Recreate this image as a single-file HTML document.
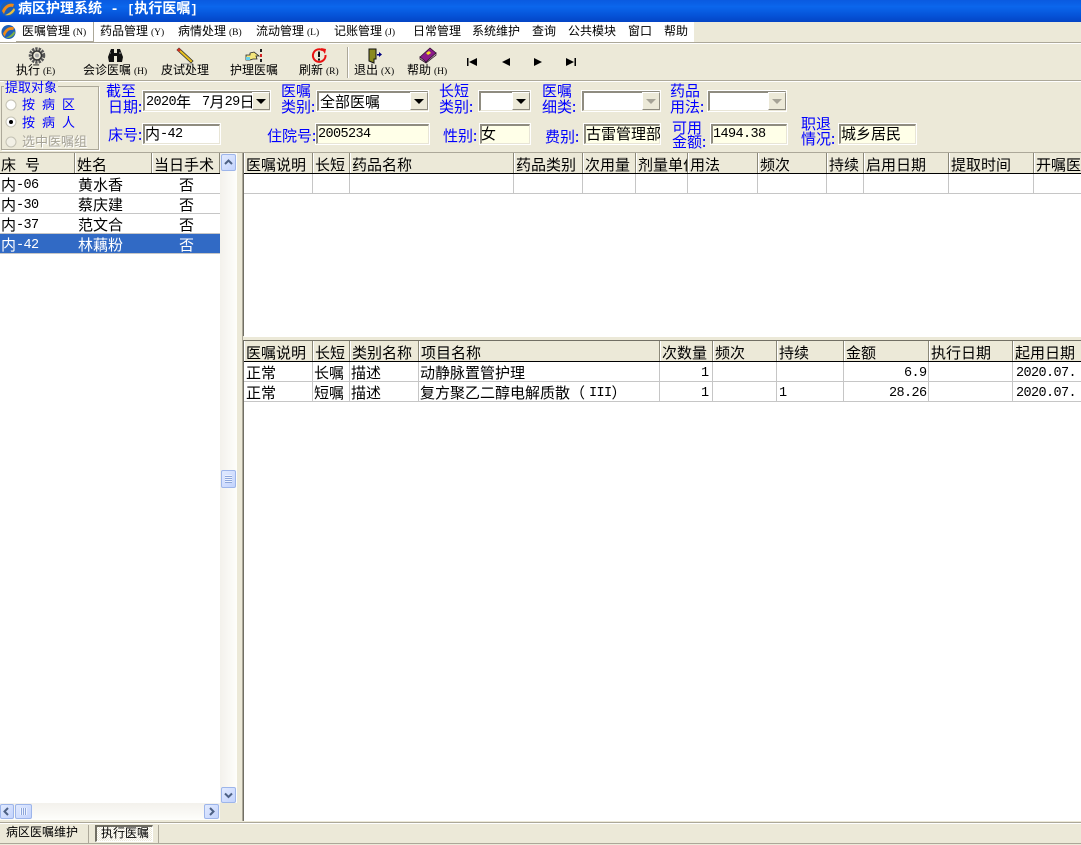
<!DOCTYPE html>
<html><head><meta charset="utf-8"><style>
html,body{margin:0;padding:0;width:1081px;height:845px;overflow:hidden;background:#ece9d8}
body{position:relative;font-family:"Liberation Mono","WenQuanYi Zen Hei","Noto Sans CJK SC",monospace;color:#000}
div,svg{position:absolute}
.t{white-space:nowrap;line-height:15px}
.m{font-size:12px;top:25px;line-height:14px;white-space:nowrap}
.m i,.b i{font-style:normal;font-size:9.5px;font-family:"Liberation Serif",serif;margin-left:3px}
.b{font-size:12px;top:64px;line-height:14px;white-space:nowrap;text-align:center}
.l{color:#00f;font-size:15px;line-height:15px;white-space:nowrap;margin-top:2px;font-family:"WenQuanYi Zen Hei","Noto Sans CJK SC",sans-serif}
.n{font-size:15px;line-height:15px;white-space:nowrap;margin-top:2px}
.n b,.c b{font-weight:normal;font-size:13.5px;letter-spacing:-.6px;position:relative;top:-2px}
.f{box-sizing:border-box;height:22px;border:1px solid #fff;outline:0;background:#fff}
.f:before{content:"";position:absolute;left:0;top:0;right:0;bottom:0;border-top:2px solid #8f8c80;border-left:2px solid #8f8c80;border-right:1px solid #e8e5d6;border-bottom:1px solid #e8e5d6}
.y{background:#ffffe8}
.dd{width:18px;height:18px;right:1px;top:1px;background:#ece9d8;border-right:1px solid #8f8c80;border-bottom:1px solid #8f8c80;border-left:1px solid #fff;border-top:1px solid #fff;box-sizing:border-box}
.dd:after{content:"";position:absolute;left:3px;top:6px;border-left:5px solid transparent;border-right:5px solid transparent;border-top:5px solid #000}
.dd.g:after{border-top-color:#a5a296}
.h{height:20px;top:0;box-sizing:border-box;background:#ece9d8;border-right:1px solid #8b8878;border-left:1px solid #fff;font-size:15px;line-height:27px;white-space:nowrap;overflow:hidden;padding-left:1px}
.v{width:1px;background:#c6c6c6}
.r{height:1px;background:#c6c6c6}
.c{font-size:15px;line-height:23px;white-space:nowrap}
.sb{box-sizing:border-box;background:linear-gradient(135deg,#e1eafe,#c3d3fd);border:1px solid #9db5ea;border-radius:2px}
</style></head><body>

<!-- title -->
<div style="left:0;top:0;width:1081px;height:22px;background:linear-gradient(#0a5ae0 0,#0b66ec 30%,#0553d8 70%,#0444c4 100%)"></div>
<svg style="left:0;top:1px" width="16" height="16" viewBox="0 0 16 16"><circle cx="8" cy="8" r="7.500" fill="#1c5fb8"/><path d="M2 10C5 3 10 2 14 3L13 6C9 5 6 7 4 13Z" fill="#f08a18"/><path d="M5 14C8 13 11 11 14 7L15 9C13 13 9 15 5 14Z" fill="#e8c040"/></svg>
<div class="t" style="left:18px;top:3px;color:#fff;font-size:14px;font-weight:bold;font-family:'Liberation Mono','Noto Sans CJK SC',monospace">病区护理系统 - <span style="font-size:12px">[</span>执行医嘱<span style="font-size:12px">]</span></div>

<!-- menu -->
<div style="left:0;top:22px;width:694px;height:20px;background:#fff"></div>
<div style="left:0;top:42px;width:1081px;height:1px;background:#aca899"></div>
<div style="left:0;top:43px;width:1081px;height:1px;background:#fff"></div>
<div style="left:93px;top:22px;width:1px;height:20px;background:#aca899"></div>
<div style="left:16px;top:41px;width:78px;height:1px;background:#aca899"></div>
<svg style="left:1px;top:24px" width="15" height="16" viewBox="0 0 16 16"><circle cx="8" cy="8" r="7.500" fill="#1c5fb8"/><path d="M2 10C5 3 10 2 14 3L13 6C9 5 6 7 4 13Z" fill="#f08a18"/><path d="M5 14C8 13 11 11 14 7L15 9C13 13 9 15 5 14Z" fill="#7bb04a"/></svg>
<div class="m" style="left:22px">医嘱管理<i>(N)</i></div>
<div class="m" style="left:100px">药品管理<i>(Y)</i></div>
<div class="m" style="left:178px">病情处理<i>(B)</i></div>
<div class="m" style="left:256px">流动管理<i>(L)</i></div>
<div class="m" style="left:334px">记账管理<i>(J)</i></div>
<div class="m" style="left:413px">日常管理</div>
<div class="m" style="left:472px">系统维护</div>
<div class="m" style="left:532px">查询</div>
<div class="m" style="left:568px">公共模块</div>
<div class="m" style="left:628px">窗口</div>
<div class="m" style="left:664px">帮助</div>

<!-- toolbar -->
<svg style="left:28px;top:47px" width="18" height="17" viewBox="0 0 18 17"><circle cx="9" cy="8.500" r="6.500" fill="none" stroke="#555" stroke-width="3.500" stroke-dasharray="2.200 1"/><circle cx="9" cy="8.500" r="4.500" fill="none" stroke="#333" stroke-width="1.500"/><circle cx="9" cy="8.500" r="2" fill="#aaa"/></svg>
<div class="b" style="left:16px">执行<i>(E)</i></div>
<svg style="left:107px;top:47px" width="17" height="16" viewBox="0 0 17 16"><path d="M2 15L1 10L4 2H7V6H10V2H13L16 10L15 15H10V9H7V15Z" fill="#111"/><path d="M3 6H4M12 6H14" stroke="#999"/></svg>
<div class="b" style="left:83px">会诊医嘱<i>(H)</i></div>
<svg style="left:176px;top:47px" width="18" height="18" viewBox="0 0 18 18"><path d="M3 1L17 14L15 16L1 3Z" fill="#e8c020" stroke="#333" stroke-width=".8"/><path d="M1 3L3 1L5 3L3 5Z" fill="#d03020"/><path d="M5 17H17" stroke="#999"/></svg>
<div class="b" style="left:161px">皮试处理</div>
<svg style="left:245px;top:48px" width="18" height="16" viewBox="0 0 18 16"><path d="M1 7H5V5L9 4L14 8H11L12 11H8L5 12H1Z" fill="#f5e67a" stroke="#222" stroke-width=".8"/><path d="M1 9H5V12H1Z" fill="#6ad0e8"/><path d="M16 1V4M16 6V9M16 11V14" stroke="#222" stroke-width="2"/><path d="M16 6V9" stroke="#d02020" stroke-width="2"/></svg>
<div class="b" style="left:230px">护理医嘱</div>
<svg style="left:311px;top:47px" width="17" height="17" viewBox="0 0 17 17"><path d="M12 3.500A6.300 6.300 0 1 0 14.500 8" fill="none" stroke="#e81010" stroke-width="2"/><path d="M10 1L15 2L14 7Z" fill="#e81010"/><path d="M7 4.500H9V10H7ZM7 11.500H9V13.500H7Z" fill="#111"/></svg>
<div class="b" style="left:299px">刷新<i>(R)</i></div>
<div style="left:347px;top:47px;width:1px;height:31px;background:#aca899"></div>
<div style="left:348px;top:47px;width:1px;height:31px;background:#fff"></div>
<svg style="left:368px;top:48px" width="15" height="16" viewBox="0 0 15 16"><path d="M1 1H8V11H6V15L1 13Z" fill="#8a8a20" stroke="#111" stroke-width="1"/><path d="M8 1V4M8 11V8" stroke="#111"/><path d="M9 6H11V4L14 6.500L11 9V7.500H9Z" fill="#000080"/></svg>
<div class="b" style="left:354px">退出<i>(X)</i></div>
<svg style="left:419px;top:47px" width="18" height="17" viewBox="0 0 18 17"><path d="M1 10L11 1L17 6L7 15Z" fill="#8a1a8a" stroke="#301030" stroke-width=".8"/><path d="M1 10V12L7 16L17 8V6L7 15Z" fill="#e8e0d0" stroke="#301030" stroke-width=".8"/><path d="M7 6L10 4L12 6L9 8Z" fill="#f0e020"/></svg>
<div class="b" style="left:407px">帮助<i>(H)</i></div>
<svg style="left:466px;top:57px" width="112" height="10" viewBox="0 0 112 10"><path d="M1 1H2.500V9H1ZM11 1V9L3 5Z"/><path d="M44 1V9L36 5Z"/><path d="M68 1L76 5L68 9Z"/><path d="M100 1L108 5L100 9ZM108.500 1H110V9H108.500Z"/></svg>
<div style="left:0;top:80px;width:1081px;height:1px;background:#aca899"></div>
<div style="left:0;top:81px;width:1081px;height:1px;background:#fff"></div>

<!-- group box -->
<div style="left:1px;top:86px;width:98px;height:64px;border:1px solid #aca899;box-sizing:border-box;box-shadow:1px 1px 0 #fff"></div>
<div class="t" style="left:4px;top:81px;background:#ece9d8;color:#00f;font-size:13px;padding:0 1px">提取对象</div>
<svg style="left:5px;top:98px" width="14" height="52" viewBox="0 0 14 52"><circle cx="6" cy="7" r="5" fill="#fff" stroke="#c4c2b4"/><circle cx="6" cy="24" r="5" fill="#fff" stroke="#c4c2b4"/><circle cx="6" cy="24" r="2" fill="#000"/><circle cx="6" cy="44" r="5" fill="#f2f0e6" stroke="#c4c2b4"/></svg>
<div class="t" style="left:22px;top:98px;color:#00f;font-size:13px;word-spacing:-.8px">按 病 区</div>
<div class="t" style="left:22px;top:116px;color:#00f;font-size:13px;word-spacing:-.8px">按 病 人</div>
<div class="t" style="left:22px;top:135px;color:#a5a296;font-size:13px;text-shadow:1px 1px 0 #fff">选中医嘱组</div>

<!-- row 1 -->
<div class="l" style="left:106px;top:81px">截至</div>
<div class="l" style="left:108px;top:97px">日期:</div>
<div class="f" style="left:142px;top:90px;width:129px"></div>
<div class="n" style="left:146px;top:94px"><b>2020</b>年<span style="margin-left:11px"></span><b>7</b>月<b>29</b>日</div>
<div class="dd" style="left:252px;top:92px"></div>

<div class="l" style="left:281px;top:81px">医嘱</div>
<div class="l" style="left:281px;top:97px">类别:</div>
<div class="f" style="left:316px;top:90px;width:113px"></div>
<div class="n" style="left:320px;top:94px">全部医嘱</div>
<div class="dd" style="left:410px;top:92px"></div>

<div class="l" style="left:439px;top:81px">长短</div>
<div class="l" style="left:439px;top:97px">类别:</div>
<div class="f" style="left:478px;top:90px;width:53px"></div>
<div class="dd" style="left:512px;top:92px"></div>

<div class="l" style="left:542px;top:81px">医嘱</div>
<div class="l" style="left:542px;top:97px">细类:</div>
<div class="f" style="left:581px;top:90px;width:80px"></div>
<div class="dd g" style="left:642px;top:92px"></div>

<div class="l" style="left:670px;top:81px">药品</div>
<div class="l" style="left:670px;top:97px">用法:</div>
<div class="f" style="left:707px;top:90px;width:80px"></div>
<div class="dd g" style="left:768px;top:92px"></div>

<!-- row 2 -->
<div class="l" style="left:108px;top:125px">床号:</div>
<div class="f" style="left:142px;top:123px;width:79px"></div>
<div class="n" style="left:145px;top:126px">内<b>-42</b></div>

<div class="l" style="left:267px;top:126px">住院号:</div>
<div class="f y" style="left:315px;top:123px;width:115px"></div>
<div class="n" style="left:318px;top:126px"><b>2005234</b></div>

<div class="l" style="left:443px;top:126px">性别:</div>
<div class="f y" style="left:479px;top:123px;width:52px"></div>
<div class="n" style="left:481px;top:126px">女</div>

<div class="l" style="left:545px;top:127px">费别:</div>
<div class="f y" style="left:583px;top:123px;width:78px"></div>
<div style="left:586px;top:126px;width:74px;height:18px;overflow:hidden"><div class="n" style="left:0;top:0">古雷管理部</div></div>

<div class="l" style="left:672px;top:118px">可用</div>
<div class="l" style="left:672px;top:132px">金额:</div>
<div class="f y" style="left:710px;top:123px;width:78px"></div>
<div class="n" style="left:713px;top:126px"><b>1494.38</b></div>

<div class="l" style="left:801px;top:114px">职退</div>
<div class="l" style="left:801px;top:129px">情况:</div>
<div class="f y" style="left:838px;top:123px;width:79px"></div>
<div class="n" style="left:841px;top:126px">城乡居民</div>

<div style="left:0;top:152px;width:1081px;height:1px;background:#aca899"></div>

<!-- left grid -->
<div style="left:0;top:153px;width:220px;height:650px;background:#fff"></div>
<div style="left:0;top:153px;width:220px;height:20px;background:#ece9d8"></div>
<div class="h" style="left:-1px;top:153px;width:76px">床 号</div>
<div class="h" style="left:75px;top:153px;width:77px">姓名</div>
<div class="h" style="left:152px;top:153px;width:68px">当日手术</div>
<div style="left:0;top:173px;width:220px;height:1px;background:#000"></div>
<div class="r" style="left:0;top:193px;width:220px"></div>
<div class="r" style="left:0;top:213px;width:220px"></div>
<div class="r" style="left:0;top:233px;width:220px"></div>
<div class="r" style="left:0;top:253px;width:220px"></div>
<div style="left:0;top:234px;width:220px;height:19px;background:#316ac5"></div>
<div class="c" style="left:1px;top:175px">内<b>-06</b></div><div class="c" style="left:78px;top:175px">黄水香</div><div class="c" style="left:179px;top:175px">否</div>
<div class="c" style="left:1px;top:195px">内<b>-30</b></div><div class="c" style="left:78px;top:195px">蔡庆建</div><div class="c" style="left:179px;top:195px">否</div>
<div class="c" style="left:1px;top:215px">内<b>-37</b></div><div class="c" style="left:78px;top:215px">范文合</div><div class="c" style="left:179px;top:215px">否</div>
<div class="c" style="left:1px;top:235px;color:#fff">内<b>-42</b></div><div class="c" style="left:78px;top:235px;color:#fff">林藕粉</div><div class="c" style="left:179px;top:235px;color:#fff">否</div>

<!-- vertical scrollbar -->
<div style="left:220px;top:153px;width:17px;height:650px;background:linear-gradient(90deg,#f3f1ec,#fefefb)"></div>
<div class="sb" style="left:221px;top:154px;width:15px;height:17px"></div>
<svg style="left:224px;top:159px" width="9" height="7"><path d="M1 5L4.500 1.500L8 5" fill="none" stroke="#4d6185" stroke-width="2"/></svg>
<div class="sb" style="left:221px;top:470px;width:15px;height:18px"></div>
<div style="left:225px;top:475px;width:7px;height:8px;background:repeating-linear-gradient(#eef3fe 0,#eef3fe 1px,#8da6db 1px,#8da6db 2px)"></div>
<div class="sb" style="left:221px;top:787px;width:15px;height:16px"></div>
<svg style="left:224px;top:792px" width="9" height="7"><path d="M1 1.500L4.500 5L8 1.500" fill="none" stroke="#4d6185" stroke-width="2"/></svg>
<!-- horizontal scrollbar -->
<div style="left:0;top:803px;width:220px;height:17px;background:linear-gradient(#f3f1ec,#fefefb)"></div>
<div class="sb" style="left:0;top:804px;width:14px;height:15px"></div>
<svg style="left:3px;top:807px" width="7" height="9"><path d="M5 1L1.500 4.500L5 8" fill="none" stroke="#4d6185" stroke-width="2"/></svg>
<div class="sb" style="left:15px;top:804px;width:17px;height:15px"></div>
<div style="left:20px;top:808px;width:7px;height:7px;background:repeating-linear-gradient(90deg,#eef3fe 0,#eef3fe 1px,#8da6db 1px,#8da6db 2px)"></div>
<div class="sb" style="left:204px;top:804px;width:15px;height:15px"></div>
<svg style="left:208px;top:807px" width="7" height="9"><path d="M2 1L5.500 4.500L2 8" fill="none" stroke="#4d6185" stroke-width="2"/></svg>

<!-- splitter -->
<div style="left:243px;top:153px;width:1px;height:183px;background:#716f64"></div>
<div style="left:243px;top:341px;width:1px;height:480px;background:#716f64"></div>
<div style="left:242px;top:153px;width:1px;height:668px;background:#aca899"></div>

<!-- top right grid -->
<div style="left:244px;top:153px;width:837px;height:183px;background:#fff"></div>
<div class="h" style="left:244px;top:153px;width:69px">医嘱说明</div>
<div class="h" style="left:313px;top:153px;width:37px">长短</div>
<div class="h" style="left:350px;top:153px;width:164px">药品名称</div>
<div class="h" style="left:514px;top:153px;width:69px">药品类别</div>
<div class="h" style="left:583px;top:153px;width:53px">次用量</div>
<div class="h" style="left:636px;top:153px;width:52px">剂量单位</div>
<div class="h" style="left:688px;top:153px;width:70px">用法</div>
<div class="h" style="left:758px;top:153px;width:69px">频次</div>
<div class="h" style="left:827px;top:153px;width:37px">持续</div>
<div class="h" style="left:864px;top:153px;width:85px">启用日期</div>
<div class="h" style="left:949px;top:153px;width:85px">提取时间</div>
<div class="h" style="left:1034px;top:153px;width:47px;border-right:0">开嘱医生</div>
<div style="left:244px;top:173px;width:837px;height:1px;background:#000"></div>
<div class="r" style="left:244px;top:193px;width:837px"></div>
<div class="v" style="left:312px;top:174px;height:19px"></div>
<div class="v" style="left:349px;top:174px;height:19px"></div>
<div class="v" style="left:513px;top:174px;height:19px"></div>
<div class="v" style="left:582px;top:174px;height:19px"></div>
<div class="v" style="left:635px;top:174px;height:19px"></div>
<div class="v" style="left:687px;top:174px;height:19px"></div>
<div class="v" style="left:757px;top:174px;height:19px"></div>
<div class="v" style="left:826px;top:174px;height:19px"></div>
<div class="v" style="left:863px;top:174px;height:19px"></div>
<div class="v" style="left:948px;top:174px;height:19px"></div>
<div class="v" style="left:1033px;top:174px;height:19px"></div>
<div style="left:244px;top:336px;width:837px;height:1px;background:#fff"></div>

<!-- bottom right grid -->
<div style="left:243px;top:340px;width:838px;height:1px;background:#716f64"></div>
<div style="left:244px;top:341px;width:837px;height:480px;background:#fff"></div>
<div class="h" style="left:244px;top:341px;width:69px">医嘱说明</div>
<div class="h" style="left:313px;top:341px;width:37px">长短</div>
<div class="h" style="left:350px;top:341px;width:69px">类别名称</div>
<div class="h" style="left:419px;top:341px;width:241px">项目名称</div>
<div class="h" style="left:660px;top:341px;width:53px">次数量</div>
<div class="h" style="left:713px;top:341px;width:64px">频次</div>
<div class="h" style="left:777px;top:341px;width:67px">持续</div>
<div class="h" style="left:844px;top:341px;width:85px">金额</div>
<div class="h" style="left:929px;top:341px;width:84px">执行日期</div>
<div class="h" style="left:1013px;top:341px;width:68px;border-right:0">起用日期</div>
<div style="left:244px;top:361px;width:837px;height:1px;background:#000"></div>
<div class="r" style="left:244px;top:381px;width:837px"></div>
<div class="r" style="left:244px;top:401px;width:837px"></div>
<div class="v" style="left:312px;top:362px;height:39px"></div>
<div class="v" style="left:349px;top:362px;height:39px"></div>
<div class="v" style="left:418px;top:362px;height:39px"></div>
<div class="v" style="left:659px;top:362px;height:39px"></div>
<div class="v" style="left:712px;top:362px;height:39px"></div>
<div class="v" style="left:776px;top:362px;height:39px"></div>
<div class="v" style="left:843px;top:362px;height:39px"></div>
<div class="v" style="left:928px;top:362px;height:39px"></div>
<div class="v" style="left:1012px;top:362px;height:39px"></div>

<div class="c" style="left:246px;top:363px">正常</div>
<div class="c" style="left:314px;top:363px">长嘱</div>
<div class="c" style="left:351px;top:363px">描述</div>
<div class="c" style="left:420px;top:363px">动静脉置管护理</div>
<div class="c" style="left:701px;top:363px"><b>1</b></div>
<div class="c" style="left:904px;top:363px"><b>6.9</b></div>
<div class="c" style="left:1016px;top:363px"><b>2020.07.</b></div>

<div class="c" style="left:246px;top:383px">正常</div>
<div class="c" style="left:314px;top:383px">短嘱</div>
<div class="c" style="left:351px;top:383px">描述</div>
<div class="c" style="left:420px;top:383px">复方聚乙二醇电解质散（<b style="margin-left:4px">III</b>）</div>
<div class="c" style="left:701px;top:383px"><b>1</b></div>
<div class="c" style="left:779px;top:383px"><b>1</b></div>
<div class="c" style="left:889px;top:383px"><b>28.26</b></div>
<div class="c" style="left:1016px;top:383px"><b>2020.07.</b></div>

<!-- status/tab bar -->
<div style="left:0;top:821px;width:1081px;height:24px;background:#ece9d8"></div>
<div style="left:0;top:822px;width:1081px;height:1px;background:#aca899"></div>
<div style="left:0;top:823px;width:1081px;height:1px;background:#fff"></div>
<div style="left:0;top:843px;width:1081px;height:1px;background:#aca899"></div>
<div class="t" style="left:6px;top:826px;font-size:12px">病区医嘱维护</div>
<div style="left:88px;top:825px;width:1px;height:18px;background:#aca899"></div>
<div style="left:95px;top:825px;width:58px;height:17px;box-sizing:border-box;border-top:2px solid #716f64;border-left:2px solid #716f64;border-right:1px solid #fff;border-bottom:1px solid #fff;background:repeating-conic-gradient(#fff 0 25%,#ece9d8 0 50%) 0 0/2px 2px"></div>
<div class="t" style="left:101px;top:827px;font-size:12px">执行医嘱</div>
<div style="left:158px;top:825px;width:1px;height:18px;background:#aca899"></div>
</body></html>
